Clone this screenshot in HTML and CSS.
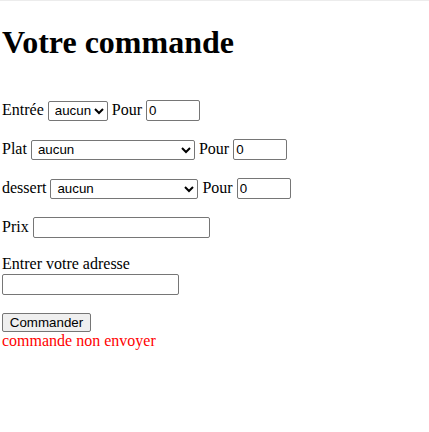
FILE: index.html
```html
<!DOCTYPE html>
<html lang="fr">
<head>
<meta charset="utf-8">
<title>Votre commande</title>
<link rel="stylesheet" href="styles.css">
</head>
<body>
<h1 class="title">Votre commande</h1>
<form class="order">
  <p class="row">Entrée <select class="sel sel-entree"><option>aucun</option></select> Pour <input class="qty" type="text" value="0"></p>
  <p class="row">Plat <select class="sel sel-plat"><option>aucun</option></select> Pour <input class="qty" type="text" value="0"></p>
  <p class="row">dessert <select class="sel sel-dessert"><option>aucun</option></select> Pour <input class="qty" type="text" value="0"></p>
  <p class="row">Prix <input class="field" type="text"></p>
  <p class="row">Entrer votre adresse<br><input class="field" type="text"></p>
  <div class="actions"><button class="submit" type="button">Commander</button></div>
  <div class="status">commande non envoyer</div>
</form>
</body>
</html>
```
FILE: styles.css
```css
html {
  border-top: 1px solid #ececec;
}
body {
  margin: 0;
  padding: 2px;
  font-family: "Liberation Serif", "Times New Roman", serif;
  font-size: 16px;
  color: #000;
  background: #fff;
}
.title {
  font-size: 32px;
  font-weight: bold;
  margin: 21px 0 38px;
}
.row {
  margin: 16px 0;
}
.sel, .qty, .field, .submit {
  font-family: "Liberation Sans", Arial, sans-serif;
  font-size: 13.33px;
  color: #000;
  box-sizing: border-box;
  border: 1px solid #767676;
  border-radius: 2px;
  vertical-align: baseline;
}
.qty, .field {
  height: 21px;
  margin: 1px 0;
  padding: 1px 2px;
  background: #fff;
}
.sel {
  height: 20px;
  margin: 1px 0;
  padding: 0 0 0 2px;
  background: #fff;
}
.sel-entree { width: 60px; }
.sel-plat { width: 164px; }
.sel-dessert { width: 148px; }
.qty { width: 54px; }
.field { width: 177px; }
.actions {
  padding-top: 1px;
}
.submit {
  margin: 0;
  width: 89px;
  height: 19px;
  padding: 0 6px;
  background: #efefef;
}
.status {
  color: #ff0000;
}
```
